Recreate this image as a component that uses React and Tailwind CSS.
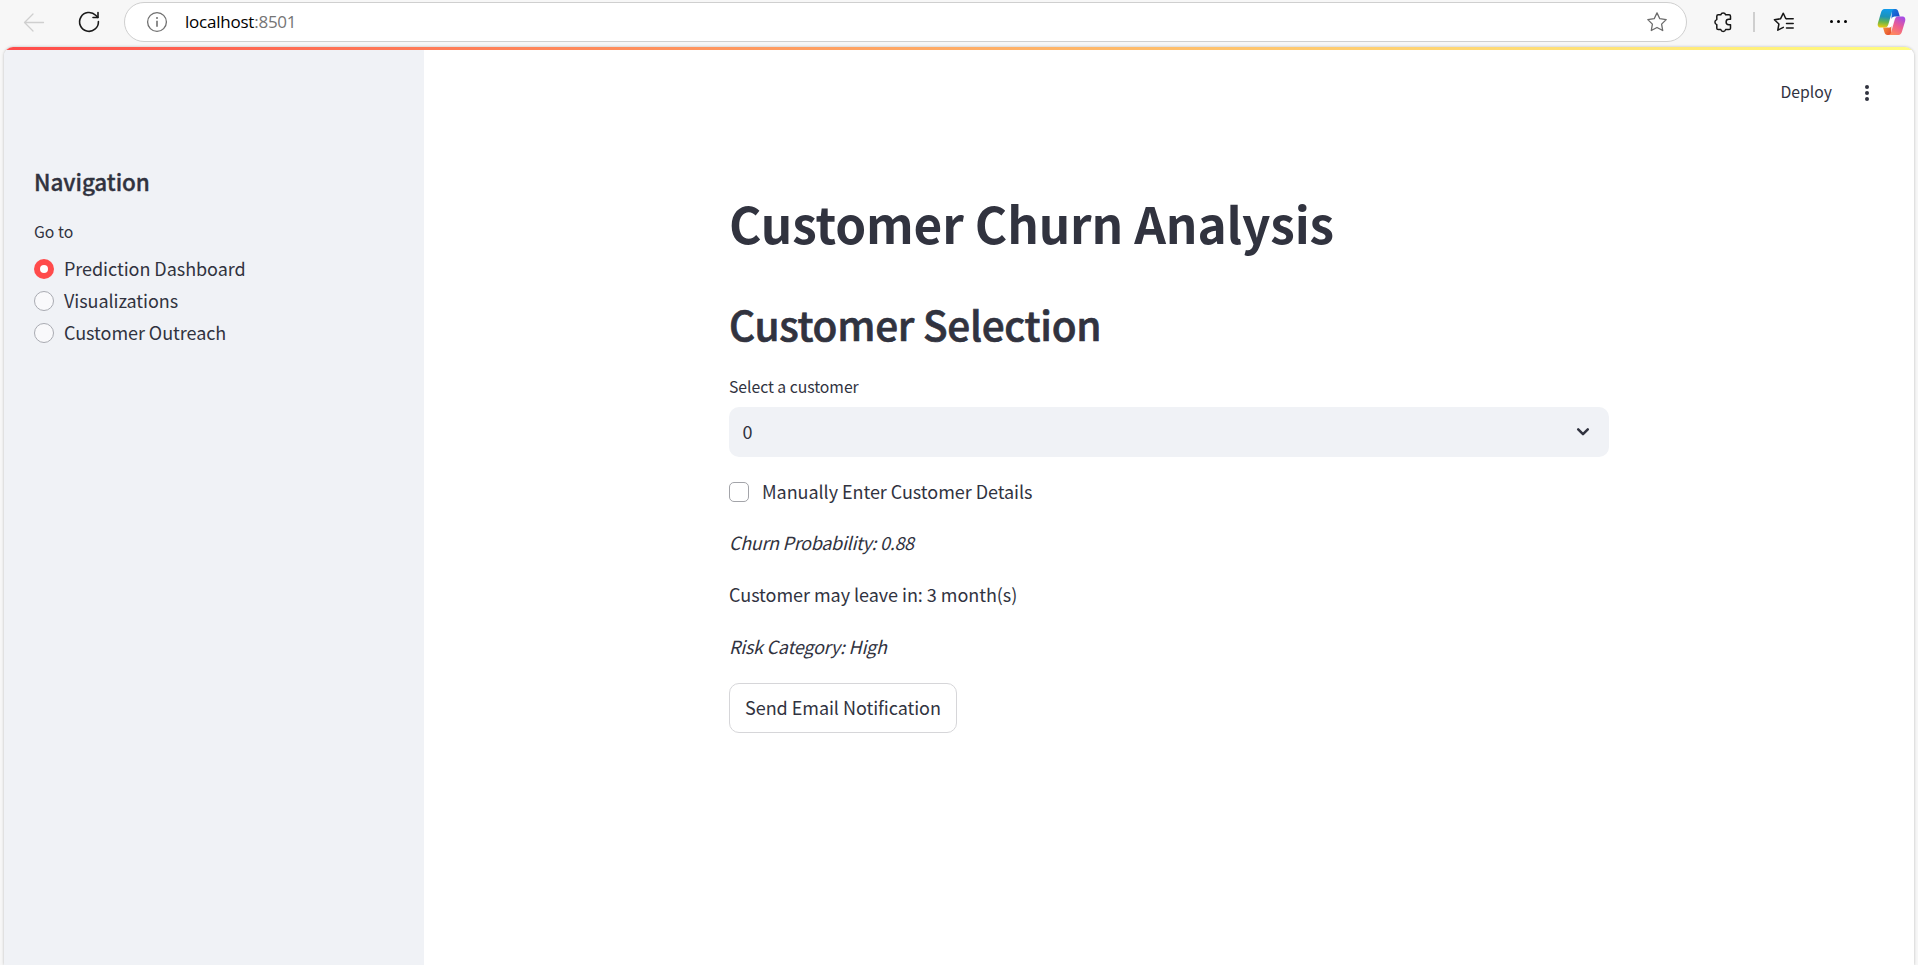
import React from "react";

const BackIcon = () => (
  <svg className="h-6 w-6" viewBox="0 0 24 24" fill="none" stroke="#cfcfcf" strokeWidth="1.3" strokeLinecap="round" strokeLinejoin="round">
    <path d="M21.5 12.5H2.5M11 4L2.5 12.5 11 21" />
  </svg>
);

const ReloadIcon = () => (
  <svg className="h-6 w-6" viewBox="0 0 24 24" fill="none" stroke="#1a1a1a" strokeWidth="1.6" strokeLinecap="round" strokeLinejoin="round">
    <path d="M21.4 11.6A9.4 9.4 0 1 1 18.7 5.3L20.8 7.4" />
    <path d="M21 2.6V7.5H16" />
  </svg>
);

const InfoIcon = () => (
  <svg className="h-[22px] w-[22px]" viewBox="0 0 22 22" fill="none" stroke="#707070" strokeWidth="1.3">
    <circle cx="11" cy="11" r="9.4" />
    <path d="M11 9.7v6" strokeWidth="1.6" />
    <circle cx="11" cy="7" r="1" fill="#707070" stroke="none" />
  </svg>
);

const StarIcon = () => (
  <svg className="h-[22px] w-[22px]" viewBox="0 0 22 22" fill="none" stroke="#6b6b6b" strokeWidth="1.3" strokeLinejoin="round">
    <path d="M11 1.9l2.8 5.8 6.4.9-4.6 4.5 1.1 6.4L11 16.5l-5.7 3 1.1-6.4L1.8 8.6l6.4-.9z" />
  </svg>
);

const ExtensionsIcon = () => (
  <svg className="h-6 w-6" viewBox="0 0 24 24" fill="none" stroke="#161616" strokeWidth="1.5" strokeLinejoin="round">
    <path d="M6.2 4.8H8.8A2.5 2.5 0 0 1 13.600 4.800H17.100A1.400 1.400 0 0 1 18.500 6.200V9.300H16.800A2.600 2.600 0 0 0 16.800 14.700H18.500V18.200A1.400 1.400 0 0 1 17.100 19.600H13.600A2.500 2.500 0 0 1 8.800 19.600H6.200A1.400 1.400 0 0 1 4.800 18.200V14.600A2.600 2.600 0 0 1 4.800 9.600V6.200A1.400 1.400 0 0 1 6.200 4.800Z" />
  </svg>
);

const FavoritesIcon = () => (
  <svg className="h-6 w-6" viewBox="0 0 24 24" fill="none" stroke="#161616" strokeWidth="1.5" strokeLinecap="round" strokeLinejoin="round">
    <path d="M14.200 8.600L13.700 8.500 11.300 3.200 8.500 8.800 2.400 9.700 6.900 14 5.800 20.200 11.300 17.400" />
    <path d="M14.500 8.700H21.200M14.500 13.400H21.200M14.500 18H21.200" />
  </svg>
);

const CopilotIcon = () => (
  <svg className="h-[28px] w-[29px]" viewBox="0 0 29 28">
    <defs>
      <linearGradient id="cpBlue" x1="0.3" y1="0" x2="0.2" y2="1">
        <stop offset="0" stopColor="#129bea" />
        <stop offset="0.4" stopColor="#1c93b8" />
        <stop offset="0.7" stopColor="#6cb648" />
        <stop offset="1" stopColor="#f3cb0c" />
      </linearGradient>
      <linearGradient id="cpDark" x1="0" y1="0" x2="1" y2="1">
        <stop offset="0" stopColor="#1683e0" />
        <stop offset="1" stopColor="#1c3fc4" />
      </linearGradient>
      <linearGradient id="cpPink" x1="0.8" y1="0" x2="0.3" y2="1">
        <stop offset="0" stopColor="#a44be8" />
        <stop offset="0.5" stopColor="#ec5c93" />
        <stop offset="1" stopColor="#ff8a5c" />
      </linearGradient>
      <linearGradient id="cpOrange" x1="0" y1="0" x2="1" y2="1">
        <stop offset="0" stopColor="#fa9a3c" />
        <stop offset="1" stopColor="#e2452f" />
      </linearGradient>
    </defs>
    <path d="M15 8.500H18.500L13.500 19.500H10z" fill="#fff" />
    <path d="M15 1h3.500c1.600 0 2.300.9 2.800 2.500L22.800 8.500H18c-2 0-3 .8-3.600 2.700z" fill="url(#cpDark)" />
    <path d="M14 27h-3.600c-1.600 0-2.400-.9-2.900-2.500L6 19.500h4.800c2 0 3-.9 3.600-2.700z" fill="url(#cpOrange)" />
    <path d="M7.500 1H18c-1.800 0-2.600 1.200-3.100 2.900L11.300 16.500c-.6 2-1.600 3-3.500 3H3.700C1 19.500.2 17.300 1 14.700L4 4.500C4.700 2.200 5.700 1 7.500 1z" fill="url(#cpBlue)" />
    <path d="M21.500 27H11.200c1.700 0 2.500-1.200 3-2.900l3.600-12.600c.6-2 1.600-3 3.500-3h4.100c2.600 0 3.400 2.200 2.700 4.800L25 23.500c-.7 2.300-1.700 3.500-3.500 3.500z" fill="url(#cpPink)" />
    <path d="M18.300 8.800C16.200 8.900 15 9.700 14.400 11.700L12.700 17.300C12.200 18.700 11.600 19.400 10.300 19.500 12.700 19.700 14.500 19.600 15.300 17L16.900 11.500C17.300 10.200 17.700 9.300 18.300 8.800Z" fill="#fff" />
  </svg>
);

function BrowserBar() {
  return (
    <div className="flex h-[47px] shrink-0 items-start">
      <div className="flex h-[43px] w-[124px] items-center gap-[31px] pl-[22px]">
        <BackIcon />
        <ReloadIcon />
      </div>
      <div className="mt-[2px] flex h-10 w-[1563px] items-center rounded-full border border-[#cfcfcf] bg-white pr-[18px] pl-[21px]">
        <InfoIcon />
        <span className="ml-[17px] flex-1 font-['Open_Sans',sans-serif] text-[17px] leading-6 tracking-[-0.23px] text-black">
          localhost<span className="text-[#757575]">:8501</span>
        </span>
        <StarIcon />
      </div>
      <div className="flex h-[43px] flex-1 items-center">
        <div className="ml-[25px]"><ExtensionsIcon /></div>
        <div className="ml-[17px] h-5 w-[2px] bg-[#cfcfcf]" />
        <div className="ml-[17px]"><FavoritesIcon /></div>
        <div className="ml-[34px] flex gap-[4px]">
          <i className="h-[3px] w-[3px] rounded-full bg-black" />
          <i className="h-[3px] w-[3px] rounded-full bg-black" />
          <i className="h-[3px] w-[3px] rounded-full bg-black" />
        </div>
        <div className="ml-[30px]"><CopilotIcon /></div>
      </div>
    </div>
  );
}

function RadioOption({ label, checked }) {
  return (
    <label className="flex h-8 items-center">
      <span
        className={
          checked
            ? "mt-[2px] flex h-5 w-5 items-center justify-center rounded-full bg-[#ff4b4b]"
            : "mt-[2px] flex h-5 w-5 items-center justify-center rounded-full border border-[#a9abb2] bg-[#f9f9fb]"
        }
      >
        {checked && <span className="h-2 w-2 rounded-full bg-white" />}
      </span>
      <span className="ml-[10px] text-[18px] leading-8 tracking-[-0.05px]">{label}</span>
    </label>
  );
}

function Sidebar() {
  return (
    <aside className="w-[420px] shrink-0 bg-[#f0f2f6] pt-[116px] pl-[30px]">
      <h2 className="text-[22.5px] leading-[30px] font-medium tracking-[-0.08px] [-webkit-text-stroke:0.35px_#31333f]">Navigation</h2>
      <div className="mt-[23px] text-[15.75px] leading-[26px]">Go to</div>
      <div className="mt-[7px]">
        <RadioOption label="Prediction Dashboard" checked />
        <RadioOption label="Visualizations" />
        <RadioOption label="Customer Outreach" />
      </div>
    </aside>
  );
}

function Main() {
  return (
    <main className="flex flex-1 flex-col bg-white">
      <div className="flex h-[85px] items-center justify-end pr-[45px]">
        <span className="mb-px text-[15.75px] leading-6">Deploy</span>
        <div className="ml-[33px] flex flex-col gap-[2px]">
          <i className="h-1 w-1 rounded-full bg-[#31333f]" />
          <i className="h-1 w-1 rounded-full bg-[#31333f]" />
          <i className="h-1 w-1 rounded-full bg-[#31333f]" />
        </div>
      </div>
      <div className="mx-auto w-[880px] pt-[55px]">
        <h1 className="text-[49.5px] leading-[66px] font-bold tracking-[-0.13px]">Customer Churn Analysis</h1>
        <h2 className="mt-[41px] text-[40.5px] leading-[54px] font-medium tracking-[-0.28px] [-webkit-text-stroke:0.7px_#31333f]">Customer Selection</h2>
        <div className="mt-[23px] text-[15.75px] leading-[26px] tracking-[-0.04px]">Select a customer</div>
        <div className="mt-[7px] flex h-[50px] items-center justify-between rounded-[10px] bg-[#f0f2f6] pr-[19px] pl-[13.5px]">
          <span className="mb-[2px] text-[18px] leading-8">0</span>
          <svg className="h-3.5 w-3.5" viewBox="0 0 14 14" fill="none" stroke="#31333f" strokeWidth="2.5" strokeLinecap="round" strokeLinejoin="round">
            <path d="M2.200 4.300L7 9.100l4.800-4.800" />
          </svg>
        </div>
        <label className="mt-[18px] flex h-8 items-center">
          <span className="mt-[2px] h-5 w-5 rounded-[5px] border border-[#a3a4a9] bg-white" />
          <span className="ml-[13px] text-[18px] leading-8 tracking-[-0.05px]">Manually Enter Customer Details</span>
        </label>
        <p className="mt-[19px] text-[18px] leading-8 tracking-[-0.3px] italic">Churn Probability: 0.88</p>
        <p className="mt-5 text-[18px] leading-8 tracking-[-0.04px]">Customer may leave in: 3 month(s)</p>
        <p className="mt-5 text-[18px] leading-8 tracking-[-0.24px] italic">Risk Category: High</p>
        <button className="mt-[21px] flex h-[50px] w-[228px] items-center justify-center rounded-[10px] border border-[#d6d6d9] pb-[2px] text-[18px] leading-8 tracking-[-0.05px] whitespace-nowrap">
          Send Email Notification
        </button>
      </div>
    </main>
  );
}

export default function App() {
  return (
    <div className="flex h-[965px] w-[1918px] flex-col overflow-hidden bg-[#f7f7f7] font-['Noto_Sans_CJK_SC',sans-serif] text-[#31333f]">
      <BrowserBar />
      <div className="mx-1 flex flex-1 flex-col overflow-hidden rounded-t-[9px] shadow-[0_0_3px_rgba(0,0,0,0.25)]">
        <div className="h-[3px] shrink-0 bg-linear-to-r from-[#ff4b4b] to-[#fffd80]" />
        <div className="flex flex-1">
          <Sidebar />
          <Main />
        </div>
      </div>
    </div>
  );
}
